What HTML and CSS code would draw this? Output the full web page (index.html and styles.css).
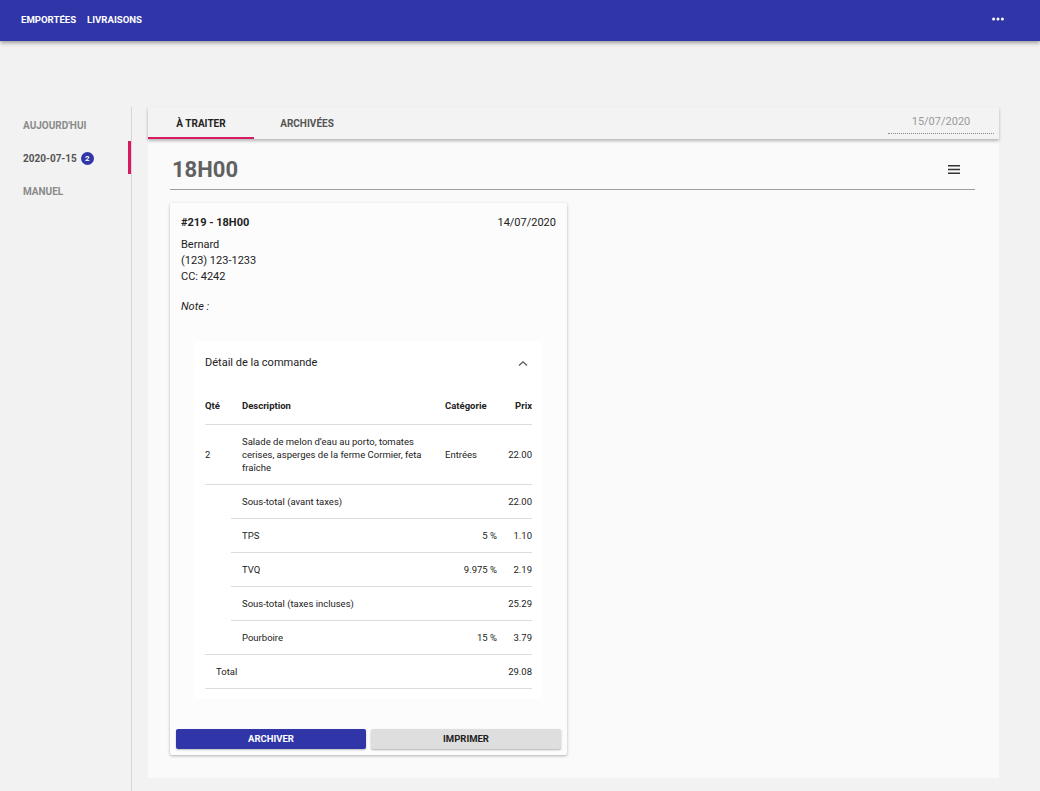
FILE: index.html
```html
<!DOCTYPE html>
<html lang="fr">
<head>
<meta charset="utf-8">
<title>Commandes</title>
<link rel="stylesheet" href="styles.css">
</head>
<body>
<header class="appbar">
  <nav class="appnav">
    <a class="appnav-link">EMPORTÉES</a>
    <a class="appnav-link">LIVRAISONS</a>
  </nav>
  <svg class="more" width="12" height="4" viewBox="0 0 12 4"><circle cx="1.6" cy="2" r="1.5" fill="#fff"/><circle cx="6" cy="2" r="1.5" fill="#fff"/><circle cx="10.4" cy="2" r="1.5" fill="#fff"/></svg>
</header>
<div class="layout">
  <aside class="sidebar">
    <div class="side-item">AUJOURD'HUI</div>
    <div class="side-item active">2020-07-15 <span class="badge">2</span></div>
    <div class="side-item">MANUEL</div>
  </aside>
  <main class="main">
    <div class="tabbar">
      <div class="tab selected">À TRAITER</div>
      <div class="tab">ARCHIVÉES</div>
      <div class="spacer"></div>
      <div class="datefield">15/07/2020</div>
    </div>
    <section class="content">
      <div class="slot-head">
        <h1 class="slot-title">18H00</h1>
        <svg class="menu-icon" width="12" height="9" viewBox="0 0 12 9"><rect x="0" y="0" width="12" height="1.5" fill="#333"/><rect x="0" y="3.75" width="12" height="1.5" fill="#333"/><rect x="0" y="7.5" width="12" height="1.5" fill="#333"/></svg>
      </div>
      <article class="card">
        <div class="card-body">
          <div class="order-head">
            <span class="order-id">#219 - 18H00</span>
            <span class="order-date">14/07/2020</span>
          </div>
          <div class="client">
            <div>Bernard</div>
            <div>(123) 123-1233</div>
            <div>CC: 4242</div>
          </div>
          <div class="note">Note :</div>
          <div class="panel">
            <div class="panel-head">
              <span>Détail de la commande</span>
              <svg class="chev" width="10" height="7" viewBox="0 0 10 7"><polyline points="1,5.5 5,1.8 9,5.5" fill="none" stroke="#555" stroke-width="1.2"/></svg>
            </div>
            <table class="items">
              <colgroup><col class="c1"><col class="c2"><col class="c3"><col class="c4"></colgroup>
              <thead>
                <tr><th class="qty">Qté</th><th>Description</th><th>Catégorie</th><th class="num">Prix</th></tr>
              </thead>
              <tbody>
                <tr class="item"><td class="qty">2</td><td>Salade de melon d’eau au porto, tomates cerises, asperges de la ferme Cormier, feta fraîche</td><td>Entrées</td><td class="num">22.00</td></tr>
                <tr class="sub"><td class="blank" rowspan="5"></td><td>Sous-total (avant taxes)</td><td class="num"></td><td class="num">22.00</td></tr>
                <tr class="sub"><td>TPS</td><td class="num">5 %</td><td class="num">1.10</td></tr>
                <tr class="sub"><td>TVQ</td><td class="num">9.975 %</td><td class="num">2.19</td></tr>
                <tr class="sub"><td>Sous-total (taxes incluses)</td><td class="num"></td><td class="num">25.29</td></tr>
                <tr class="sub"><td>Pourboire</td><td class="num">15 %</td><td class="num">3.79</td></tr>
                <tr class="sub total"><td class="total-label" colspan="3">Total</td><td class="num">29.08</td></tr>
              </tbody>
            </table>
          </div>
        </div>
        <div class="card-actions">
          <button class="btn primary">ARCHIVER</button>
          <button class="btn secondary">IMPRIMER</button>
        </div>
      </article>
    </section>
  </main>
</div>
</body>
</html>
```
FILE: styles.css
```css
* { box-sizing: border-box; }
html, body { margin: 0; padding: 0; }
body {
  background: #f2f2f2;
  font-family: Roboto, "Liberation Sans", Arial, sans-serif;
  color: #212121;
  height: 791px;
  overflow: hidden;
}
.appbar {
  height: 41px;
  background: #3036a7;
  box-shadow: 0 2px 4px rgba(0,0,0,0.35);
  display: flex;
  align-items: center;
  padding: 0 36px 3px 21px;
  position: relative;
  z-index: 2;
}
.appnav { display: flex; gap: 11px; }
.appnav-link {
  color: #fff;
  font-size: 9.6px;
  font-weight: 700;
}
.more { margin-left: auto; }
.layout {
  display: flex;
  margin-top: 66px;
}
.sidebar {
  width: 132px;
  border-right: 1px solid #d6d6d6;
  min-height: 684px;
  padding-top: 1px;
}
.side-item {
  height: 33px;
  display: flex;
  align-items: center;
  padding-left: 23px;
  padding-top: 2px;
  font-size: 10px;
  font-weight: 700;
  color: #8a8a8a;
}
.side-item.active {
  color: #555;
  border-right: 3px solid #d81b60;
}
.badge {
  display: inline-flex;
  align-items: center;
  justify-content: center;
  width: 13px;
  height: 13px;
  border-radius: 50%;
  background: #3036a7;
  color: #fff;
  font-size: 8px;
  font-weight: 700;
  margin-left: 4px;
}
.main {
  width: 851px;
  margin-left: 16px;
}
.tabbar {
  height: 32px;
  display: flex;
  align-items: stretch;
  background: #f3f3f3;
  box-shadow: 0 2px 3px rgba(0,0,0,0.28);
  position: relative;
  z-index: 1;
}
.tab {
  width: 106px;
  display: flex;
  align-items: center;
  justify-content: center;
  font-size: 10px;
  font-weight: 700;
  color: #555;
  border-bottom: 2px solid transparent;
  padding-top: 2px;
}
.tab.selected { color: #222; border-bottom-color: #d81b60; }
.spacer { flex: 1; }
.datefield {
  width: 106px;
  margin: 0 5px 5px 0;
  display: flex;
  align-items: center;
  justify-content: center;
  font-size: 11px;
  color: #9a9a9a;
  border-bottom: 1px dotted #888;
  padding-top: 2px;
}
.content {
  background: #fafafa;
  padding: 0 24px 23px 22px;
}
.slot-head {
  height: 51px;
  padding-top: 10px;
  display: flex;
  align-items: center;
  justify-content: space-between;
  border-bottom: 1px solid #9e9e9e;
  padding-right: 15px;
}
.slot-title {
  margin: 0;
  font-size: 22px;
  font-weight: 700;
  color: #616161;
  padding-left: 2px;
}
.card {
  margin-top: 13px;
  width: 397px;
  background: #fcfcfc;
  box-shadow: 0 1px 3px rgba(0,0,0,0.3);
  border-radius: 2px;
}
.card-body { padding: 12px 11px 0; font-size: 11px; line-height: 16px; color: #222; }
.order-head { display: flex; justify-content: space-between; }
.order-id { font-weight: 700; }
.client { margin-top: 6px; }
.note { margin-top: 14px; font-style: italic; }
.panel {
  margin: 26px 14px 0 13px;
  background: #fff;
  padding: 0 10px 10px 11px;
}
.panel-head {
  height: 42px;
  padding-top: 2px;
  display: flex;
  align-items: center;
  justify-content: space-between;
  font-size: 11px;
  padding-right: 4px;
}
.items {
  margin-top: 5px;
  width: 327px;
  table-layout: fixed;
  border-collapse: collapse;
  font-size: 9.5px;
  color: #222;
}
.c1 { width: 26px; }
.c2 { width: 203px; }
.c3 { width: 63px; }
.c4 { width: 35px; }
.items th, .items td {
  padding: 0 0 0 11px;
  text-align: left;
  vertical-align: middle;
  border-bottom: 1px solid #dcdcdc;
  line-height: 13px;
}
.items th { font-weight: 700; height: 36px; }
.items td.qty, .items th.qty { padding-left: 0; }
.items td:nth-child(2) { padding-right: 11px; }
.items .num { text-align: right; }
.items tr.item td { height: 60px; }
.items tr.sub td { height: 34px; }
.items td.blank { border-bottom: 1px solid #dcdcdc; }
.items tr.sub td:nth-child(2) { padding-right: 0; }
.card-actions {
  display: grid;
  grid-template-columns: 1fr 1fr;
  gap: 5px;
  padding: 30px 6px 6px;
}
.btn {
  height: 20px;
  border: 0;
  border-radius: 2px;
  font-family: Roboto, "Liberation Sans", Arial, sans-serif;
  font-size: 9.5px;
  font-weight: 700;
  padding: 0;
}
.btn.primary { background: #3036a7; color: #fff; box-shadow: 0 1px 2px rgba(0,0,0,0.25); }
.btn.secondary { background: #dedede; color: #222; box-shadow: 0 1px 2px rgba(0,0,0,0.3); }
```
